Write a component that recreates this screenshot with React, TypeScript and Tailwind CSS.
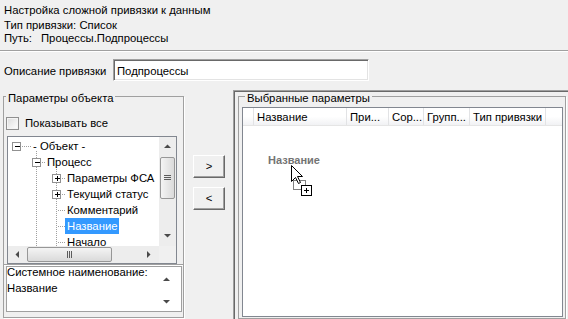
import React from 'react';

type Dir = 'up' | 'down' | 'left' | 'right';

function Arrow({ dir }: { dir: Dir }) {
  const vertical = dir === 'up' || dir === 'down';
  const w = vertical ? 7 : 4;
  const h = vertical ? 4 : 7;
  const points = {
    up: '0,4 3.5,0.5 7,4',
    down: '0,0 7,0 3.5,3.5',
    left: '4,0 4,7 0.5,3.5',
    right: '0,0 0,7 3.5,3.5',
  }[dir];
  return (
    <svg width={w} height={h} viewBox={`0 0 ${w} ${h}`} className="block">
      <polygon points={points} fill="#4a4a4a" />
    </svg>
  );
}

// dotted tree connectors, one pixel on, one off
function dots(x1: number, y1: number, x2: number, y2: number) {
  const out: React.ReactNode[] = [];
  if (y1 === y2) {
    for (let x = x1; x <= x2; x += 2) out.push(<rect key={`h${x}-${y1}`} x={x} y={y1} width={1} height={1} />);
  } else {
    for (let y = y1; y <= y2; y += 2) out.push(<rect key={`v${x1}-${y}`} x={x1} y={y} width={1} height={1} />);
  }
  return out;
}

function Expander({ cx, cy, open }: { cx: number; cy: number; open: boolean }) {
  return (
    <g>
      <rect x={cx - 3.5} y={cy - 3.5} width={8} height={8} fill="#fff" stroke="#919191" />
      <rect x={cx - 1} y={cy} width={5} height={1} fill="#000" />
      {!open && <rect x={cx + 1} y={cy - 2} width={1} height={5} fill="#000" />}
    </g>
  );
}

const treeRows = [
  { pad: 'pl-[23px]', text: '- Объект -' },
  { pad: 'pl-[37px]', text: 'Процесс' },
  { pad: 'pl-[57px]', text: 'Параметры ФСА' },
  { pad: 'pl-[57px]', text: 'Текущий статус' },
  { pad: 'pl-[57px]', text: 'Комментарий' },
  { pad: 'pl-[57px]', text: 'Название', selected: true },
  { pad: 'pl-[57px]', text: 'Начало' },
];

const columns = [
  { w: 'w-[11px]', label: '' },
  { w: 'w-[93px]', label: 'Название' },
  { w: 'w-[42px]', label: 'При...' },
  { w: 'w-[35px]', label: 'Сор...' },
  { w: 'w-[46px]', label: 'Групп...' },
  { w: 'w-[76px]', label: 'Тип привязки' },
];

function ObjectTree() {
  return (
    <div className="ml-[3px] mt-[6px] w-[170px] h-[128px] flex flex-col border border-[#828790] bg-white">
      <div className="flex h-[109px]">
        <div className="relative w-[151px] overflow-hidden pt-[1px]">
          <svg width={151} height={109} className="absolute left-0 top-0" fill="#a0a0a0">
            {dots(14, 9, 22, 9)}
            {dots(28, 14, 28, 108)}
            {dots(34, 25, 36, 25)}
            {dots(48, 30, 48, 108)}
            {dots(54, 41, 56, 41)}
            {dots(54, 57, 56, 57)}
            {dots(50, 73, 56, 73)}
            {dots(50, 89, 56, 89)}
            {dots(50, 105, 56, 105)}
            <Expander cx={8} cy={9} open />
            <Expander cx={28} cy={25} open />
            <Expander cx={48} cy={41} open={false} />
            <Expander cx={48} cy={57} open={false} />
          </svg>
          {treeRows.map((r) => (
            <div key={r.text} className={`relative h-[16px] leading-[16px] whitespace-nowrap ${r.pad}`}>
              <span className={r.selected ? 'inline-block px-[2px] bg-[#3399ff] text-white' : 'inline-block px-[2px]'}>
                {r.text}
              </span>
            </div>
          ))}
        </div>
        {/* vertical scrollbar */}
        <div className="w-[17px] flex flex-col items-center bg-[#ededed]">
          <div className="h-[17px] flex items-center justify-center">
            <Arrow dir="up" />
          </div>
          <div className="mt-[3px] w-[15px] h-[42px] rounded-[2px] border border-[#979797] bg-gradient-to-r from-[#f4f4f4] to-[#dadada] flex items-center justify-center">
            <svg width={7} height={6} className="block">
              <rect x={0} y={0} width={7} height={1} fill="#5c5c5c" />
              <rect x={0} y={2} width={7} height={1} fill="#5c5c5c" />
              <rect x={0} y={4} width={7} height={1} fill="#5c5c5c" />
            </svg>
          </div>
          <div className="flex-1" />
          <div className="h-[17px] flex items-center justify-center pb-[4px]">
            <Arrow dir="down" />
          </div>
        </div>
      </div>
      {/* horizontal scrollbar */}
      <div className="flex h-[17px]">
        <div className="w-[151px] flex items-center bg-[#ededed]">
          <div className="w-[17px] flex items-center justify-center">
            <Arrow dir="left" />
          </div>
          <div className="ml-[2px] w-[85px] h-[15px] rounded-[2px] border border-[#979797] bg-gradient-to-b from-[#f4f4f4] to-[#dadada] flex items-center justify-center">
            <svg width={6} height={7} className="block">
              <rect x={0} y={0} width={1} height={7} fill="#5c5c5c" />
              <rect x={2} y={0} width={1} height={7} fill="#5c5c5c" />
              <rect x={4} y={0} width={1} height={7} fill="#5c5c5c" />
            </svg>
          </div>
          <div className="flex-1" />
          <div className="w-[17px] flex items-center justify-center pr-[4px]">
            <Arrow dir="right" />
          </div>
        </div>
        <div className="w-[17px] bg-[#f0f0f0]" />
      </div>
    </div>
  );
}

function ClassicButton({ label }: { label: string }) {
  return (
    <div className="w-[32px] h-[23px] flex items-center justify-center bg-[#f0f0f0] border border-t-white border-l-white border-r-[#696969] border-b-[#696969] shadow-[inset_-1px_-1px_0_#a0a0a0]">
      {label}
    </div>
  );
}

export default function App() {
  return (
    <div className="w-[568px] h-[319px] overflow-hidden flex flex-col bg-[#f0f0f0] text-black text-[11.3px] leading-[13px] font-['Liberation_Sans',Arial,sans-serif]">
      <div className="pl-[4px] pt-[4px]">
        <div>Настройка сложной привязки к данным</div>
        <div className="mt-[2px]">Тип привязки: Список</div>
        <div className="flex">
          <span className="w-[37px]">Путь:</span>
          <span>Процессы.Подпроцессы</span>
        </div>
      </div>

      <div className="mt-[5px] h-[2px] border-t border-b border-t-[#a0a0a0] border-b-white" />

      <div className="mt-[7px] pl-[4px] flex items-start h-[22px]">
        <span className="w-[109px] pt-[6px]">Описание привязки</span>
        <div className="w-[256px] h-[22px] pl-[3px] pt-[5px] bg-white border border-t-[#a0a0a0] border-l-[#a0a0a0] border-r-white border-b-white shadow-[inset_1px_1px_0_#696969,inset_-1px_-1px_0_#e3e3e3]">
          Подпроцессы
        </div>
      </div>

      <div className="mt-[9px] flex-1 flex">
        {/* left side */}
        <div className="w-[233px] flex items-start">
          <div className="relative ml-[3px] mt-[6px] w-[181px] h-[222px] border border-[#a0a0a0] shadow-[1px_1px_0_#fff] flex flex-col">
            <span className="absolute left-[2px] -top-[5px] px-[2px] bg-[#f0f0f0] whitespace-nowrap">Параметры объекта</span>

            <div className="mt-[20px] ml-[2px] h-[13px] flex items-center gap-[6px]">
              <div className="w-[13px] h-[13px] border border-[#8f8f8f] bg-gradient-to-br from-[#dcdcdc] to-white shadow-[inset_0_0_0_1px_#f4f4f4]" />
              <span>Показывать все</span>
            </div>

            <ObjectTree />

            <div className="h-[2px] border-t border-b border-t-[#a0a0a0] border-b-white" />

            <div className="ml-[2px] w-[176px] h-[46px] flex border border-[#a0a0a0] bg-white overflow-hidden">
              <div className="flex-1 -mt-[3px] leading-[16px]">
                Системное наименование:
                <br />
                Название
              </div>
              <div className="w-[22px] pr-[7px] flex flex-col items-center justify-between pt-[10px] pb-[7px]">
                <Arrow dir="up" />
                <Arrow dir="down" />
              </div>
            </div>
          </div>

          <div className="ml-[9px] mt-[65px] flex flex-col gap-[9px]">
            <ClassicButton label=">" />
            <ClassicButton label="<" />
          </div>
        </div>

        {/* right side */}
        <div className="flex-1 border-t border-l border-[#a0a0a0] shadow-[inset_1px_1px_0_#696969]">
          <div className="relative ml-[4px] mt-[5px] w-[328px] h-[223px] border border-[#a0a0a0] shadow-[1px_1px_0_#fff]">
            <span className="absolute left-[6px] -top-[5px] px-[2px] bg-[#f0f0f0] whitespace-nowrap">Выбранные параметры</span>

            <div className="relative ml-[3px] mt-[10px] w-[321px] h-[210px] border border-[#828790] bg-white overflow-hidden">
              <div className="flex h-[18px] leading-[18px] bg-gradient-to-b from-white via-white to-[#f1f2f4] border-b border-[#e5e5e5]">
                {columns.map((c, i) => (
                  <div key={i} className={`${c.w} shrink-0 pl-[3px] border-r border-[#e2e3e5] overflow-hidden whitespace-nowrap`}>
                    {c.label}
                  </div>
                ))}
                <div className="flex-1" />
              </div>

              <span className="absolute left-[25px] top-[46px] text-[11px] font-bold text-[#747474] whitespace-nowrap">
                Название
              </span>
              <svg width={23} height={32} className="absolute left-[48px] top-[57px]">
                <rect x={2.5} y={15.5} width={12} height={9} fill="none" stroke="#000" strokeDasharray="1 1" />
                <polygon
                  points="0.5,0.5 0.5,16.5 4.5,12.5 7.5,18.5 9.5,17.5 6.5,11.5 11.5,11.5"
                  fill="#fff"
                  stroke="#000"
                />
                <rect x={10.5} y={20.5} width={10} height={10} fill="#fff" stroke="#000" />
                <path d="M13 25.5 h5 M15.5 23 v5" stroke="#000" />
              </svg>
            </div>
          </div>
        </div>
      </div>
    </div>
  );
}
